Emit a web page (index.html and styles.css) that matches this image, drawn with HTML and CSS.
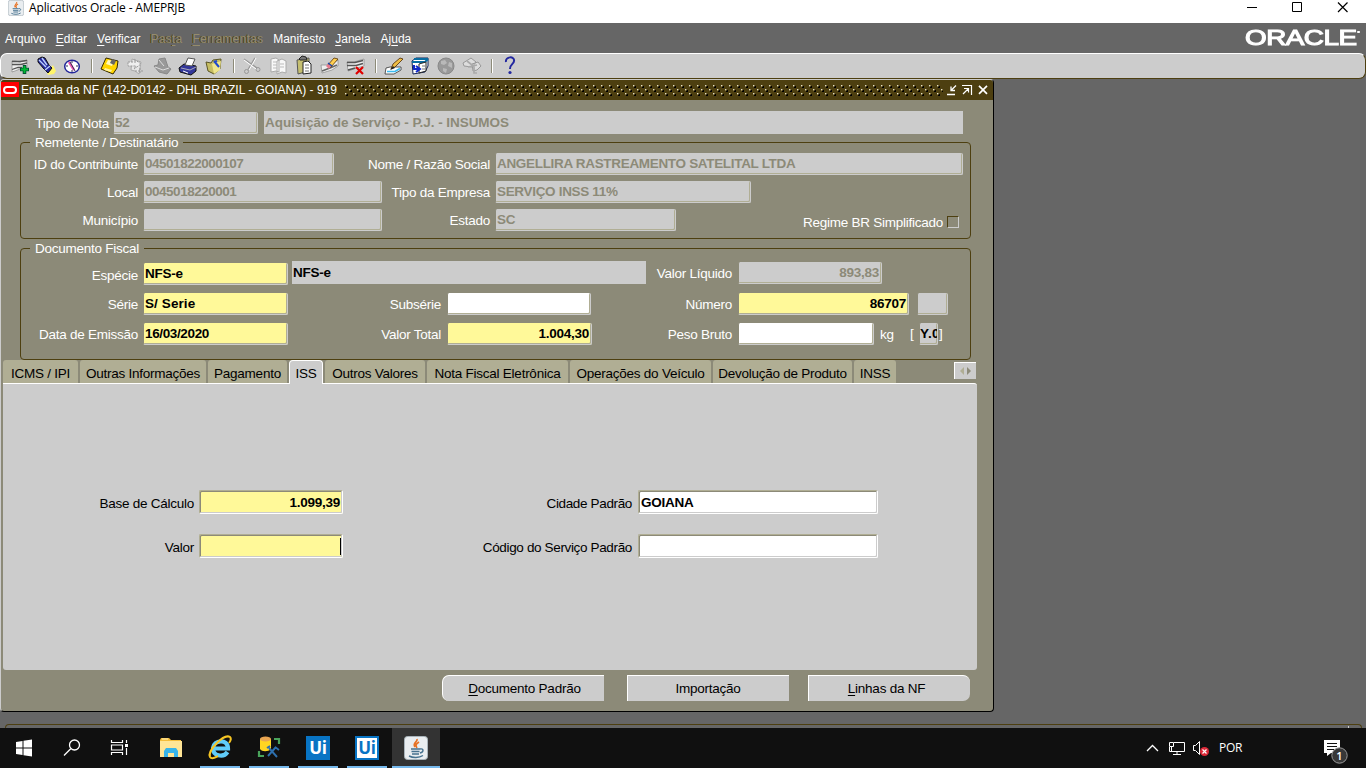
FILE: index.html
```html
<!DOCTYPE html>
<html lang="pt-BR">
<head>
<meta charset="utf-8">
<title>Aplicativos Oracle - AMEPRJB</title>
<link rel="stylesheet" href="styles.css">
</head>
<body>
<svg class="defs" width="0" height="0">
  <defs>
    <symbol id="java" viewBox="0 0 24 24">
      <rect x=".5" y=".5" width="23" height="23" rx="3" fill="#e9edf0" stroke="#a9b4bb"/>
      <path d="M13 3c1 3-5 4-2 8M15 6c-3 2-4 3-2 6" fill="none" stroke="#e77224" stroke-width="1.7"/>
      <path d="M7 13h9M7.500 15.500h8M8 18h7M16 13c4-1 4 3 0 4M5 20c4 2 10 2 14-.5" fill="none" stroke="#46728f" stroke-width="1.4"/>
    </symbol>
    <pattern id="bumps" width="8" height="8" patternUnits="userSpaceOnUse">
      <path d="M2 1h1v2H1V2h1zM6 5h1v2H5V6h1z" fill="#000"/>
      <path d="M0 0h1v1H0zM4 4h1v1H4z" fill="#e2dfca"/>
      <path d="M1 0h1v1H1zM5 4h1v1H5zM0 1h1v1H0zM4 5h1v1H4z" fill="#8d8058"/>
    </pattern>
  </defs>
</svg>

<header class="os-title">
  <svg class="os-icon" width="16" height="16"><use href="#java"/></svg>
  <span class="os-name">Aplicativos Oracle - AMEPRJB</span>
  <svg class="os-buttons" width="106" height="16" fill="none" stroke="#000"><path d="M2 7.500h10M47.500 2.500h9v9h-9z"/><path d="M93 2.500l9.500 9.500M102.500 2.500l-9.500 9.500" stroke-width="1.200"/></svg>
</header>

<nav class="menu">
  <span>Arquivo</span><span><u>E</u>ditar</span><span><u>V</u>erificar</span><span class="off">Pas<u>t</u>a</span><span class="off"><u>F</u>erramentas</span><span>Manifesto</span><span><u>J</u>anela</span><span>Aj<u>u</u>da</span>
  <b class="oracle">ORACLE<i></i></b>
</nav>

<div class="toolbar">
  <svg class="tool" viewBox="0 0 26 24"><path d="M5 7h3l5 1 7-2v7l-7 2-5 2-3 1z" fill="#eee" stroke="#888" stroke-width=".7"/><path d="M5 7.500h8l7-1M5 10.500h9l6-1.500M5 15.500l6-2h4" fill="none" stroke="#555" stroke-width="1.300"/><path d="M17.500 11v9M13 15.500h9" stroke="#053" stroke-width="3.600"/><path d="M17.500 12v7M14 15.500h7" stroke="#0b3" stroke-width="1.800"/></svg>
  <svg class="tool" viewBox="0 0 26 24"><path d="M14 19l6-8 3 6-2 3-6 1z" fill="#fff46a"/><path d="M5 5l4-2 3 1 4 7 3 3-4 5-4-4-6-7z" fill="#24279a" stroke="#111"/><path d="M6 6l7 7M9 4l5 7M12 16l5-4" stroke="#bcd0ff" stroke-width="1.400"/></svg>
  <svg class="tool" viewBox="0 0 26 24"><ellipse cx="13" cy="12.500" rx="7.300" ry="6.300" fill="#fff" stroke="#24279a" stroke-width="1.500"/><path d="M10 8l5 8" stroke="#f055b0" stroke-width="2.400"/><path d="M13 7v2M13 16v2M7 12h2M17 12h2M11 8l5 9" stroke="#335"/></svg>
  <i class="sep"></i>
  <svg class="tool" viewBox="0 0 26 24"><path d="M9 4l12 3-1 7-4 6-12-5z" fill="#ffd500" stroke="#332800"/><path d="M11 6l6 1-2 5-6-2z" fill="#fff9bd"/><path d="M15 5l4 2-2 4-4-2z" fill="#666"/><path d="M8 14l7 2-1 2-7-2z" fill="#fff3a0"/></svg>
  <svg class="tool" viewBox="0 0 26 24"><path d="M9 5l9 3-2 12-4-3-4-1z" fill="#e6e6e6" stroke="#aaa"/><path d="M5 8h8l-2-3 7 5-7 5 2-3H5zM12 17h9m-4-3v6" fill="#eee" stroke="#999" stroke-dasharray="2 1"/></svg>
  <svg class="tool" viewBox="0 0 26 24"><path d="M5 12l4-1 1-6 6-1 3 9 3 2-4 5-8-2z" fill="#999" stroke="#888"/><path d="M10 6l5 6M6 13l8 3 6-2" stroke="#ddd" fill="none"/></svg>
  <svg class="tool" viewBox="0 0 26 24"><path d="M4 14l5-4 12 2v5l-5 4-11-3z" fill="#32369a" stroke="#111"/><path d="M10 11l3-7 7 1-3 7z" fill="#fff" stroke="#555"/><path d="M6 14l9 2 6-3" stroke="#aab" fill="none"/><path d="M8 17l5 2" stroke="#fff"/></svg>
  <svg class="tool" viewBox="0 0 26 24"><path d="M5 8l5 1 2-3 8-1-1 10-6 5-6-3z" fill="#c6bd63" stroke="#5a5525"/><path d="M11 10l9-3-1 9-6 4z" fill="#eee58b"/><path d="M13 7l5 6M13 8l3-1" stroke="#2149ca" stroke-width="2"/></svg>
  <i class="sep"></i>
  <svg class="tool" viewBox="0 0 26 24" fill="none" stroke="#999"><path d="M5 5l13 9M16 4L9 16" stroke-width="1.500"/><circle cx="7.500" cy="17.500" r="2"/><circle cx="19" cy="15.500" r="2"/><path d="M5 6l12 9M17 4l-7 12" stroke="#fff"/></svg>
  <svg class="tool" viewBox="0 0 26 24"><path d="M6 5l5-1 3 2v12l-3-1-5 1zM12 7l5-2 4 2v12l-4-1-5 2z" fill="#f8f8f8" stroke="#aaa"/><path d="M8 8h4M8 11h4M8 14h4M15 10h4M15 13h4" stroke="#bbb"/></svg>
  <svg class="tool" viewBox="0 0 26 24"><path d="M6 6l12-2v13L7 20z" fill="#c5bf70" stroke="#555"/><path d="M8 5l3-3 4 1 1 3H9z" fill="#777" stroke="#222"/><path d="M12 8l5-1 3 3v9l-8 1z" fill="#fff" stroke="#222"/><path d="M14 11h4M14 14h4M14 17h4" stroke="#777"/></svg>
  <svg class="tool" viewBox="0 0 26 24"><path d="M4 11h8l9-5v6l-6 4-10 3z" fill="#eee" stroke="#888" stroke-width=".7"/><path d="M5 17l8-3 7-3" fill="none" stroke="#666" stroke-width="1.500"/><path d="M10 12l7-8 4 1-7 8z" fill="#ffcf50" stroke="#553000" stroke-width=".8"/><path d="M9 12l2-2 3 2-2 3z" fill="#e97a8d"/><path d="M11 9l4 3" stroke="#1843b0" stroke-width="1.500"/></svg>
  <svg class="tool" viewBox="0 0 26 24"><path d="M4 8h7l10-3v7l-7 2-9 3z" fill="#eee" stroke="#888" stroke-width=".7"/><path d="M4 8.500h8l8-2M4 11.500h9l7-2M5 16l7-2" stroke="#555" stroke-width="1.400" fill="none"/><path d="M13 13l7 7M20 13l-7 7" stroke="#e00000" stroke-width="2.200"/></svg>
  <i class="sep"></i>
  <svg class="tool" viewBox="0 0 26 24"><path d="M5 14l4-1h11v3l-7 4H4z" fill="#fff" stroke="#333" stroke-width=".8"/><path d="M6 17.500h8l5-3" fill="none" stroke="#3bbaf0" stroke-width="1.700"/><path d="M10 15l2-5 7-6 3 1-8 8z" fill="#eebd45" stroke="#4b2800" stroke-width=".8"/><path d="M9 16l3-4 2 2z" fill="#222"/></svg>
  <svg class="tool" viewBox="0 0 26 24"><path d="M5 7l4-3h12v8l-3 6-12 2z" fill="#fff" stroke="#102257"/><path d="M5 8h13l3-3M7 5h14" stroke="#086da2" stroke-width="2" fill="none"/><path d="M12 10l7-2v9l-7 2z" fill="#fff" stroke="#222"/><path d="M7 11v4h5m-3-3l4 3-4 3" fill="none" stroke="#1027c7" stroke-width="2"/><path d="M15 12h3M15 15h3" stroke="#777"/></svg>
  <svg class="tool" viewBox="0 0 26 24"><circle cx="13" cy="12" r="8" fill="#999" stroke="#888"/><path d="M8 7l4-1 2 3-3 2-3-1zM16 8l3 1v5l-4-2zM10 14l4 1-1 4-3-2z" fill="#b9b9b9"/></svg>
  <svg class="tool" viewBox="0 0 26 24"><path d="M4 9l8-5 5 4-4 5-8-1zM13 10l6-2 3 4-4 4-4 1z" fill="#ddd" stroke="#999"/><path d="M9 13l9-2M15 12v7h3M8 7l5 4" fill="none" stroke="#aaa" stroke-width="1.700"/></svg>
  <i class="sep"></i>
  <svg class="tool" viewBox="0 0 26 24"><path d="M9 8c-1-6 9-6 8-1 0 3-4 3-4 8" fill="none" stroke="#2328a0" stroke-width="2"/><circle cx="13" cy="18.500" r="1.600" fill="#2328a0"/></svg>
</div>

<main class="workspace">
  <section class="window">
    <div class="win-title">
      <span class="win-badge"><i></i></span>
      <span class="win-name">Entrada da NF (142-D0142 - DHL BRAZIL - GOIANA) - 919</span>
      <svg class="bumps" width="598" height="11"><rect width="598" height="11" fill="url(#bumps)"/></svg>
      <svg class="win-buttons" width="46" height="12" fill="none" stroke="#fff"><path d="M1 9.500h8M10 .5L5.500 5M5 1.500v4h4" stroke-width="1.300"/><path d="M16 .5h9.500V10M17 9l5-5M18 3.500h4.500v4" stroke-width="1.200"/><path d="M33 .8l8 8M41 .8l-8 8" stroke-width="1.700"/></svg>
    </div>

    <div class="row row-type">
      <label>Tipo de Nota</label><div class="field off">52</div><div class="plain off wide">Aquisição de Serviço - P.J. - INSUMOS</div>
    </div>

    <section class="group sender">
      <h2>Remetente / Destinatário</h2>
      <div class="row row-id"><label>ID do Contribuinte</label><div class="field off digits">04501822000107</div><label>Nome / Razão Social</label><div class="field off company">ANGELLIRA RASTREAMENTO SATELITAL LTDA</div></div>
      <div class="row row-local"><label>Local</label><div class="field off digits">0045018220001</div><label>Tipo da Empresa</label><div class="field off company">SERVIÇO INSS 11%</div></div>
      <div class="row row-city"><label>Município</label><div class="field off"></div><label>Estado</label><div class="field off">SC</div><label>Regime BR Simplificado</label><i class="check"></i></div>
    </section>

    <section class="group fiscal">
      <h2>Documento Fiscal</h2>
      <div class="row row-kind"><label>Espécie</label><div class="field req low">NFS-e</div><div class="plain">NFS-e</div><label>Valor Líquido</label><div class="field off num mid">893,83</div></div>
      <div class="row row-series"><label>Série</label><div class="field req serie">S/ Serie</div><label>Subsérie</label><div class="field white"></div><label>Número</label><div class="field req num">86707</div><div class="field off extra"></div></div>
      <div class="row row-date"><label>Data de Emissão</label><div class="field req date">16/03/2020</div><label>Valor Total</label><div class="field req num">1.004,30</div><label>Peso Bruto</label><div class="field white"></div><span class="unit">kg</span><span class="bracket">[</span><div class="field code">Y.0</div><span class="bracket">]</span></div>
    </section>

    <div class="tabs">
      <span class="t1">ICMS / IPI</span><span class="t2">Outras Informações</span><span class="t3">Pagamento</span><span class="t4 active">ISS</span><span class="t5">Outros Valores</span><span class="t6">Nota Fiscal Eletrônica</span><span class="t7">Operações do Veículo</span><span class="t8">Devolução de Produto</span><span class="t9">INSS</span>
      <svg class="scroller" width="22" height="17"><path d="M9 4v8L5 8z" fill="#b0ae94"/><path d="M12 4v8l4-4z" fill="#8d8b79"/></svg>
    </div>
    <section class="panel">
      <div class="row row-iss"><label>Base de Cálculo</label><div class="field req num">1.099,39</div><label>Cidade Padrão</label><div class="field white">GOIANA</div></div>
      <div class="row row-iss"><label>Valor</label><div class="field req num"><i class="caret"></i></div><label>Código do Serviço Padrão</label><div class="field white"></div></div>
    </section>
    <div class="actions"><button class="first"><u>D</u>ocumento Padrão</button><button>Importação</button><button class="last"><u>L</u>inhas da NF</button></div>
  </section>
  <div class="status"><i></i></div>
</main>

<footer class="taskbar">
  <svg width="48" height="40" fill="#fff"><path d="M16 14l6.500-1v6.500H16zM23.500 12.800l8.500-1.300v8H23.500zM16 20.500h6.500V27L16 26zM23.500 20.500H32v8l-8.500-1.300z"/></svg>
  <svg width="48" height="40" fill="none" stroke="#fff" stroke-width="1.300"><circle cx="26.500" cy="17" r="5"/><path d="M22.700 20.800L16 27.500"/></svg>
  <svg width="48" height="40" fill="none" stroke="#fff" stroke-width="1.200"><path d="M15.500 12v2.500h11V12M15.500 27v-2.500h11V27M15.500 17h11v5h-11zM30.500 12v3M30.500 20v7"/><path d="M29 17.500h3" stroke-width="3"/></svg>
  <svg class="folder" width="48" height="40"><path d="M16 12l1-2h8l2 2h10v17H16z" fill="#f4bd3a"/><path d="M16 13h22v16H16z" fill="#ffe596"/><path d="M18 11h6" stroke="#fff2bd"/><path d="M20 29v-6l2-3h10l2 3v6h-4v-4h-6v4z" fill="#37b4ea"/></svg>
  <svg class="run ie" width="40" height="40"><path d="M27.500 24c-4 6-15 4-14.500-4C13.500 12 28 10 28 20.500H15" fill="none" stroke="#60ccfa" stroke-width="4.200"/><path d="M10 29C7 23 24 5 30 9c2 2-1 6-1 6M10 29c2 3 6 0 8-1" fill="none" stroke="#f6c523" stroke-width="2"/></svg>
  <svg class="run" width="40" height="40"><path d="M11 11v10c2 3 8 3 11 0V11z" fill="#ffd522"/><ellipse cx="16.500" cy="11" rx="5.500" ry="2.500" fill="#e8a551"/><path d="M25 11h5v5M10 23v5h5" fill="none" stroke="#49a35b" stroke-width="2.200"/><path d="M20 20l8 9M27 19l-8 9M18 20l3-2M26 19l4 3" stroke="#2d6fae" stroke-width="1.900"/></svg>
  <span class="run ui"><b>Ui</b></span>
  <span class="run ui light"><b>Ui</b></span>
  <span class="run current"><svg width="24" height="24"><use href="#java"/></svg></span>
  <svg class="tray" width="66" height="40" fill="none" stroke="#fff"><path d="M2 23l5.500-5.500L13 23" stroke-width="1.300"/><path d="M29 14.500h10.500v9h-15V19M32 23v4M28 26.500h8M24.500 14.500h4v4h-4zM26.500 18v5" /><path d="M48.500 17.500h2l4-4v13l-4-4h-2z"/><circle cx="59.500" cy="23.500" r="4.500" fill="#dc2837" stroke="none"/><path d="M57.500 21.500l4 4M61.500 21.500l-4 4" stroke-width="1.200"/></svg>
  <span class="lang">POR</span>
  <svg class="notice" width="28" height="40"><path d="M1 12h16v13h-9l-4 3v-3H1z" fill="#fff"/><path d="M4 15.500h10M4 18.500h10M4 21.500h7" stroke="#111"/><circle cx="16.500" cy="27.500" r="7.700" fill="#383838" stroke="#999"/><text x="13.200" y="31.500" fill="#fff">1</text></svg>
</footer>
</body>
</html>
```
FILE: styles.css
```css
* { box-sizing: border-box; }
body {
  margin: 0; width: 1366px; height: 768px; overflow: hidden;
  display: flex; flex-direction: column; background: #666;
  font: 13.5px/16px "Liberation Sans", Arial, sans-serif; letter-spacing: -.25px; color: #000;
}
.defs { position: absolute; }
i { font-style: normal; }
u { text-decoration: underline; text-underline-offset: 2px; text-decoration-thickness: 1px; }

.os-title { height: 23px; flex: none; background: #fff; display: flex; align-items: flex-start; padding: 0 15px 0 8px; }
.os-name { margin-left: 5px; font: 12px/15px "Open Sans", "Noto Sans", sans-serif; letter-spacing: -.14px; }
.os-buttons { margin-left: auto; }

.menu { height: 30px; flex: none; display: flex; gap: 10px; padding: 8px 4px 0 5px; color: #fff; font-size: 12px; letter-spacing: 0; }
.menu .off { color: #958c6c; text-shadow: -1px 0 #4d3f10; letter-spacing: .25px; }
.oracle {
  display: flex; width: 91px; height: 16px; margin: -2px 26px 0 auto;
  font: 400 21.600px/17px "Liberation Sans", sans-serif; letter-spacing: -.4px;
  -webkit-text-stroke: 1.1px #fff; transform-origin: left; transform: scaleX(1.29);
}
.oracle i { width: 2px; height: 2px; background: #fff; margin: 2px 0 0 1px; }

.toolbar {
  height: 26px; flex: none; width: 1366px; display: flex; padding-left: 6px;
  background: #ccc; border: 1px solid #fff; border-bottom-color: #4d3f10;
  border-right-color: #4d3f10; border-radius: 7px;
}
.tool { width: 26px; height: 24px; }
.sep { width: 12px; height: 14px; margin-top: 5px; background: linear-gradient(90deg, #8d8b79, #8d8b79) 6px 0 / 1px 14px no-repeat, linear-gradient(#fff, #fff) 7px 0 / 1px 14px no-repeat; }

.workspace { height: 649px; flex: none; display: flex; flex-direction: column; }
.window {
  width: 994px; height: 633px; flex: none; background: #8c8a78;
  border: 1px solid #000; border-top-color: #ccc; border-left-color: #ccc; border-radius: 4px;
}
.win-title { height: 20px; display: flex; background: #4d3f10; color: #fff; border-radius: 3px 3px 0 0; font-size: 12px; line-height: 21px; }
.win-badge { width: 18px; height: 15px; margin-top: 2px; background: #f00; display: flex; align-items: center; justify-content: center; }
.win-badge i { width: 14px; height: 8px; border: 2px solid #fff; border-radius: 4px; }
.win-name { width: 326px; padding-left: 2px; white-space: nowrap; letter-spacing: 0; }
.bumps { margin-top: 5px; }
.win-buttons { margin: 5px 0 0 3px; }

.row { display: grid; align-items: start; }
label { height: 22px; line-height: 23px; padding-right: 5px; text-align: right; color: #fff; white-space: nowrap; }
.field {
  height: 22px; overflow: hidden; white-space: nowrap; padding: 0 2px 0 1px; background: #ccc;
  font-weight: bold; line-height: 22px;
  border: solid #ccc; border-width: 0 1px 1px 1px; border-left-color: #8c8a78; border-radius: 2px;
  box-shadow: inset -1px -1px #b0ae94;
}
.plain { height: 23px; background: #ccc; padding: 0 1px; font-weight: bold; line-height: 23px; white-space: nowrap; }
.wide { letter-spacing: -.05px; background-clip: padding-box; }
.off { color: #8c8a78; }
.digits { letter-spacing: -.48px; }
.company { letter-spacing: -.32px; }
.date { letter-spacing: -.36px; }
.serie { letter-spacing: .1px; }
.req { background: #fff999; }
.white { background: #fff; }
.num { text-align: right; }

.row-type { grid-template-columns: 112px 145px 705px; margin-top: 11px; }
.row-type label, .row-type .field { margin-top: 1px; }
.row-type label { padding-right: 4px; }
.row-type .wide { margin-left: 6px; }

.group { margin-left: 19px; width: 951px; border: 1px solid #4d3f10; border-radius: 4px; }
.group h2 { width: max-content; height: 16px; margin: -9px 0 0 9px; padding: 0 5px; background: #8c8a78; color: #fff; font: inherit; line-height: 17px; }
.sender { height: 97px; margin-top: 8px; }
.fiscal { height: 112px; margin-top: 9px; }
.row-id { grid-template-columns: 122px 191px 161px 468px; margin-top: 3px; }
.row-local, .row-city { margin-top: 6px; }
.row-local { grid-template-columns: 122px 239px 113px 256px; }
.row-city { grid-template-columns: 122px 239px 113px 181px 271px 13px; }
.row-city label:nth-of-type(3) { padding: 2px 4px 0 0; }
.check { width: 12px; height: 12px; margin-top: 7px; border: 1px solid #4d3f10; border-color: #4d3f10 #ccc #ccc #4d3f10; }
.row-kind { grid-template-columns: 122px 145px 358px 92px 144px; margin-top: 5px; height: 24px; }
.row-kind label { margin-top: 3px; }
.row-kind label:nth-of-type(2) { margin-top: 1px; padding-right: 6px; }
.row-kind .plain { margin-left: 4px; }
.low { margin-top: 2px; }
.mid { margin-top: 1px; }
.row-series { grid-template-columns: 122px 145px 159px 144px 147px 171px 39px; margin-top: 8px; }
.row-date { grid-template-columns: 122px 145px 159px 145px 146px 136px 35px 10px 19px 8px; margin-top: 8px; }
.row-series label:nth-of-type(n+2), .row-date label:nth-of-type(n+2) { padding-right: 6px; }
.extra { margin-left: 8px; }
.unit, .bracket { color: #fff; line-height: 23px; }
.unit { padding-left: 6px; }
.bracket { padding-left: 1px; line-height: 21px; }
.code { padding-left: 0; letter-spacing: .4px; }

.tabs { height: 23px; margin-left: 2px; display: flex; gap: 2px; width: 974px; }
.tabs span { height: 23px; padding-top: 1px; background: #b0ae94; border-radius: 3px 3px 0 0; text-align: center; line-height: 25px; white-space: nowrap; }
.tabs .active { background: #ccc; border: 1px solid #fff; border-bottom: 0; border-radius: 4px 4px 0 0; height: 24px; padding-top: 0; z-index: 1; }
.t1 { width: 75px; } .t2 { width: 126px; } .t3 { width: 79px; } .t4 { width: 34px; } .t5 { width: 100px; }
.t6 { width: 141px; } .t7 { width: 141px; } .t8 { width: 139px; } .t9 { width: 42px; }
.scroller { margin: 2px 1px 0 auto; background: #ccc; border: solid #fff; border-width: 1px 0 0 1px; }
.panel { width: 974px; height: 287px; margin-left: 2px; padding-top: 106px; background: #ccc; border-top: 1px solid #fff; border-radius: 0 3px 3px 3px; }
.row-iss { grid-template-columns: 196px 144px 295px 240px; height: 44px; }
.panel label { color: #000; line-height: 27px; padding-right: 5px; }
.panel label:nth-of-type(2) { padding-right: 6px; letter-spacing: -.35px; }
.panel .field { height: 24px; line-height: 23px; border: 1px solid; border-color: #b0ae94 #fff #fff #b0ae94; box-shadow: inset -1px -1px #ccc, inset 1px 1px #8c8a78; padding: 0 2px; }
.caret { display: inline-block; width: 1px; height: 17px; background: #000; margin: 3px -1px 0 0; }

.actions { display: flex; margin: 5px 0 0 441px; gap: 23px; }
.actions button { width: 162px; height: 26px; padding: 1px 1px 0 0; font: inherit; letter-spacing: inherit; background: #ccc; border: solid #fff; border-width: 1px 0 0 1px; border-radius: 0; color: #000; }
.actions .first { border-radius: 7px 0 0 7px; padding: 1px 0 0 2px; }
.actions .last { border-radius: 0 7px 7px 0; margin-left: -4px; padding-right: 6px; }

.status { flex: none; height: 4px; margin: 12px 4px 0 5px; border: 1px solid #4d3f10; border-bottom: 0; border-radius: 4px 4px 0 0; display: flex; justify-content: flex-end; }
.status i { width: 1px; height: 2px; margin: 1px 12px 0 0; background: #ccc; }

.taskbar { height: 40px; flex: none; display: flex; background: #101010; color: #fff; }
.folder { margin-right: 8px; }
.run { width: 40px; height: 40px; margin-right: 9px; flex: none; border-bottom: 2px solid #76b9ed; }
.ui { padding: 8px 0 0 8px; }
.ui b { display: block; width: 24px; height: 24px; background: #0874c4; color: #fff; font: 700 17px/24px "Open Sans", sans-serif; letter-spacing: -.3px; text-align: center; }
.ui.light b { background: #fff; color: #0874c4; border: 2px solid #0874c4; line-height: 20px; }
.ui.light { margin-right: 5px; }
.current { width: 48px; background: #333; padding: 8px 12px; margin: 0; }
.tray { margin-left: 705px; }
.lang { margin-left: 8px; font: 12px/40px "Open Sans", sans-serif; letter-spacing: -.3px; }
.notice { margin: 0 15px 0 auto; font: 600 11px "Open Sans", sans-serif; }
```
